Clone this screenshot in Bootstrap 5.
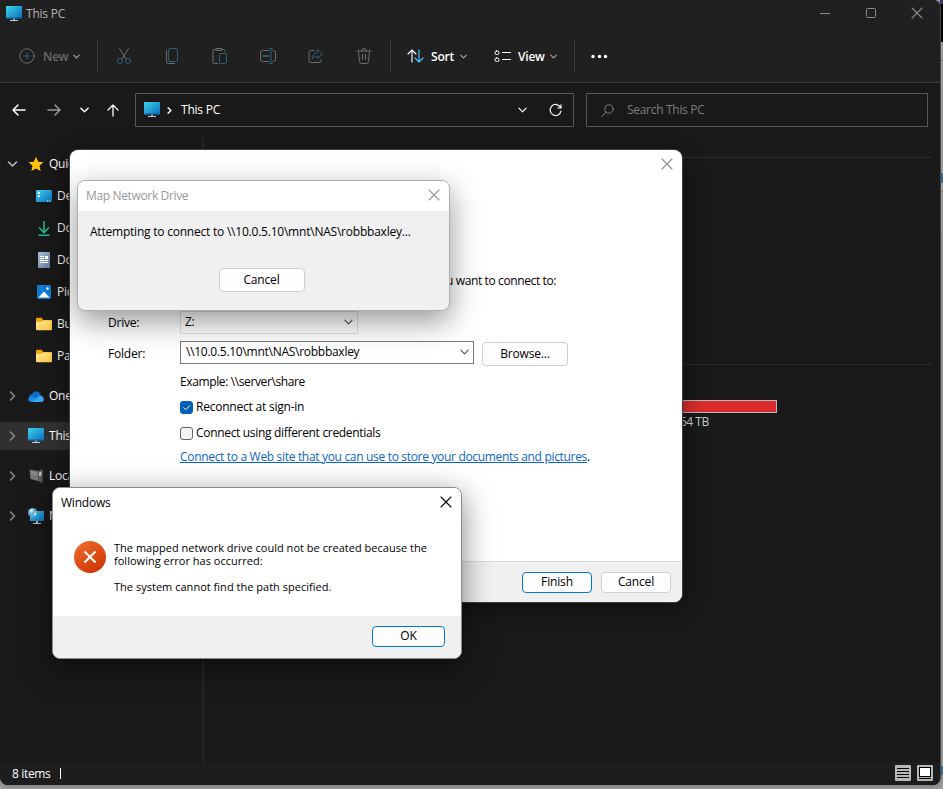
<!DOCTYPE html>
<html lang="en">
<head>
<meta charset="utf-8">
<title>This PC</title>
<meta name="viewport" content="width=device-width, initial-scale=1">
<link href="https://cdn.jsdelivr.net/npm/bootstrap@5.3.0/dist/css/bootstrap.min.css" rel="stylesheet">
<style>
html,body{height:100%;overflow:hidden}
body{font-family:"Open Sans","Noto Sans",sans-serif;font-size:12px;line-height:16px;background:#a3a3a3;color:#000;letter-spacing:-.22px}
svg{display:block;flex:none;overflow:visible}
.ln{fill:none;stroke:currentColor;stroke-linecap:round;stroke-linejoin:round}
.desk{width:943px;height:789px;background:#a3a3a3}
.edge{left:940px;top:0;width:3px;height:789px}
.edge div{width:3px}
.explorer{width:941px;height:785px;background:#191919;color:#fff;border-radius:0 8px 8px 8px;border-right:1px solid #4a4a4a;overflow:hidden;box-shadow:0 0 10px rgba(0,0,0,.4)}
.topbar{height:83px;background:#202020;border-bottom:1px solid #3d3d3d}
.titlebar{height:28px;color:#b4b4b4;padding:0 17px 2px 6px}
.titlebar svg use{transform:translateY(0)}
.winbtns{gap:34px;color:#8a8a8a}
.tools{height:54px;color:#6b6b6b;padding-top:2px}
.tools .vr{width:1px;height:32px;background:#3a3a3a;opacity:1;align-self:center}
.dim{color:#6e6e6e}.dimblue{color:#2d5f78}
.address{height:55px;padding:10px 12px 0 12px}
.addr-box{border:1px solid #565656;height:34px}
.path-box{width:439px}.search-box{width:342px;color:#7d7d7d}
.side{width:204px;padding-top:10px;border-right:2px solid #262626;color:#fff}
.side-item{height:32px;padding-left:36px}
.side-root{height:28px;padding-left:7px;margin:2px 0}
.side-root.gap-above{margin-top:12px;margin-bottom:0}
.side-item + .side-root.gap-above{margin-top:10px}
.side-root.chosen{background:#303030}
.side .chev{color:#8a8a8a;margin-right:10px}
.main-pane{padding:19px 8px 0 0}
.rule-line{height:1px;background:#2b2b2b}
.usage{width:192px;height:13px;border:1px solid #b9b9b9;background:#d92b2b;margin:35px 0 0 381px}
.usage-note{margin:1px 0 0 476px;color:#ccc;width:60px;letter-spacing:-.5px}
.status{height:23px;background:#1d1d1d;padding:0 7px 0 12px;letter-spacing:-.35px}
.caret{width:1px;height:11px;background:#fff;margin-left:10px}
.win{position:absolute;border-radius:8px;overflow:hidden}
.wizard{left:70px;top:150px;width:612px;height:452px;background:#fff;box-shadow:0 0 0 1px #3e3e3e,0 6px 22px rgba(0,0,0,.45)}
.wizard-body{padding:99px 0 0 38px;letter-spacing:-.32px}
.lead-in{height:20px;padding-left:338px;line-height:20px;letter-spacing:-.38px}
.field-name{width:72px;flex:none;letter-spacing:-.2px}
.combo{border:1px solid #dcdcdc;padding:0 4px 2px 4px;letter-spacing:-.27px}
.combo-drive{width:178px;height:23px;border-color:rgba(0,0,0,.12)}
.combo-folder{width:294px;height:23px;border-color:#7a7a7a;padding-left:5px}
.sample{letter-spacing:-.38px}
.btn-win{--bs-btn-padding-y:0;--bs-btn-padding-x:0;--bs-btn-font-size:12px;--bs-btn-line-height:16px;--bs-btn-color:#000;--bs-btn-bg:#fdfdfd;--bs-btn-border-color:#cfcfcf;--bs-btn-border-radius:4px;letter-spacing:-.15px}
.btn-win.primary{--bs-btn-border-color:#0078d4}
.wb{width:70px;height:21px}.wb-l{width:86px;height:24px}.wb-ok{width:73px;height:21px}
.tick{width:13px;height:13px;border:1px solid #666;border-radius:3px;background:#f4f4f4;margin-right:3px}
.tick.on{background:#005fb8;border-color:#005fb8}
.wizard a{color:#0b66c8}
.foot{background:#f0f0f0}
.wizard .foot{height:41px;border-top:1px solid #dcdcdc;padding-right:11px;gap:9px}
.progress-win{left:77px;top:180px;width:373px;height:131px;border:1px solid #aeaeae;background:#f0f0f0;box-shadow:0 10px 30px rgba(0,0,0,.42)}
.cap{height:30px;background:#fff;padding:0 9px 0 8px}
.progress-win .cap{letter-spacing:-.35px}
.progress-win .cap svg,.error-win .cap svg{margin-top:-2px}
.error-win{left:52px;top:487px;width:410px;height:172px;border:1px solid #8a8a8a;background:#fff;box-shadow:0 8px 30px rgba(0,0,0,.5)}
.err-text{font-size:11px;line-height:13px;letter-spacing:.02px}
.error-win .foot{height:42px;padding:0 16px 2px 0}
</style>
<script src="https://cdn.jsdelivr.net/npm/bootstrap@5.3.0/dist/js/bootstrap.bundle.min.js"></script>
</head>
<body>
<svg width="0" height="0" class="position-absolute">
<defs>
<linearGradient id="scr" x1="0" y1="0" x2="1" y2="1"><stop offset="0" stop-color="#3ed4e8"/><stop offset="1" stop-color="#0a6cc0"/></linearGradient>
<linearGradient id="fold" x1="0" y1="0" x2="1" y2="1"><stop offset="0" stop-color="#ffe9a4"/><stop offset="1" stop-color="#f8c53a"/></linearGradient>
<linearGradient id="errg" x1="0" y1="0" x2=".6" y2="1"><stop offset="0" stop-color="#f0702e"/><stop offset="1" stop-color="#d13605"/></linearGradient>
<linearGradient id="docg" x1="0" y1="0" x2="1" y2="1"><stop offset="0" stop-color="#a9bdd3"/><stop offset="1" stop-color="#5f7a9b"/></linearGradient>
<symbol id="pc" viewBox="0 0 16 16"><rect y="0" width="16" height="12.5" rx=".6" fill="url(#scr)"/><path d="M.5 12h15" stroke="#0b5a93"/><path d="M7 12.5h2v2H7z" fill="#8b9aab"/><path d="M4 14h8v1H4z" fill="#c3ccd8"/></symbol>
<symbol id="x" viewBox="0 0 12 12"><path class="ln" d="M1 1l10 10M11 1L1 11" stroke-width="1.1"/></symbol>
<symbol id="dn" viewBox="0 0 10 6"><path class="ln" d="M1 1l4 4 4-4"/></symbol>
<symbol id="rt" viewBox="0 0 6 10"><path class="ln" d="M1 1l4 4-4 4"/></symbol>
<symbol id="folder" viewBox="0 0 16 14"><path d="M0 2Q0 .8 1.2.8h4.2L7.4 3H15q1 0 1 1v8H0z" fill="#f0a808"/><path d="M0 4.8h6L7.8 3.5H15q1 0 1 1V12q0 1.2-1.2 1.2H1.200Q0 13.200 0 12z" fill="url(#fold)"/></symbol>
</defs>
</svg>

<div class="desk position-relative overflow-hidden">
  <div class="edge position-absolute d-flex flex-column">
    <div style="height:4px;background:#3a3a78"></div><div style="height:38px;background:#000"></div>
    <div style="height:18px;background:#bdbdbd"></div><div style="height:1px;background:#8b8b8b"></div>
    <div style="height:112px;background:#bdbdbd"></div><div style="height:10px;background:#4481ad"></div>
    <div style="height:8px;background:#c6c6c6"></div><div style="height:1px;background:#8b8b8b"></div>
    <div style="height:38px;background:#bdbdbd"></div><div style="height:536px;background:#b2b2b2"></div>
    <div style="height:9px;background:#3a83a6"></div>
  </div>

  <div class="explorer position-relative d-flex flex-column">
    <header class="topbar">
      <div class="titlebar d-flex align-items-center justify-content-between">
        <div class="d-flex align-items-center gap-1" style="padding-top:2px"><svg width="16" height="16"><use href="#pc"/></svg><span>This PC</span></div>
        <div class="winbtns d-flex align-items-center">
          <svg width="12" height="12"><path d="M1 6.500h10" stroke="currentColor"/></svg>
          <svg width="12" height="12"><rect x="1.500" y="1.500" width="9" height="9" rx="1" fill="none" stroke="currentColor"/></svg>
          <svg width="12" height="12"><use href="#x"/></svg>
        </div>
      </div>
      <div class="tools d-flex align-items-center">
        <div class="d-flex align-items-center" style="width:97px;padding-left:19px">
          <svg class="dim" width="16" height="16"><circle class="ln" cx="8" cy="8" r="7.200"/><path class="ln dimblue" d="M8 5v6M5 8h6"/></svg>
          <span class="fw-semibold" style="margin:2px 5px 0 8px">New</span><svg width="7" height="5" style="color:#aaa;stroke-width:1.600"><use href="#dn"/></svg>
        </div>
        <div class="vr"></div>
        <div class="d-flex align-items-center justify-content-between" style="width:256px;margin:0 18px 0 18px">
          <svg class="dim" width="16" height="16"><path class="ln" d="M3.500.5L10 11M12.500.5L6 11"/><g class="dimblue"><circle class="ln" cx="4" cy="13" r="2.500"/><circle class="ln" cx="12" cy="13" r="2.500"/></g></svg>
          <svg class="dim" width="16" height="16"><path class="ln" d="M2.500 2.500v11q0 2 2 2h6"/><rect class="ln dimblue" x="4.500" y=".5" width="9" height="13" rx="1.500"/></svg>
          <svg class="dim" width="16" height="16"><path class="ln" d="M4 1.500H2q-1 0-1 1v12q0 1 1 1h4M10 1.500h1.500q1 0 1 1v1M4.500.5h5v2h-5z"/><rect class="ln dimblue" x="7.500" y="5.500" width="7" height="10" rx="1"/></svg>
          <svg class="dim" width="16" height="16"><path class="ln" d="M8.500 2.500h-6q-2 0-2 2v7q0 2 2 2h6M13 2.500q2.500 0 2.500 2v7q0 2-2.500 2"/><g class="dimblue"><path class="ln" d="M9.500.5h3M11 .5v15M9.500 15.500h3"/><path class="ln" stroke-width="2" d="M3.500 8h5"/></g></svg>
          <svg class="dim" width="16" height="16"><path class="ln" d="M6 2.500H3q-2 0-2 2v8q0 2 2 2h8q2 0 2-2v-1"/><path class="ln dimblue" d="M9.500 4V1.500l5 4.500-5 4.500V8Q6 8 4 11q.5-6 5.500-7z"/></svg>
          <svg class="dim" width="16" height="16"><path class="ln" d="M1 3h14M6 3V2q0-1.500 2-1.500T10 2v1M2.500 3l1 10.500q.2 2 2 2h5q1.800 0 2-2L13.500 3M6.500 6.500v5M9.500 6.500v5"/></svg>
        </div>
        <div class="vr"></div>
        <div class="d-flex align-items-center text-white" style="width:183px;padding-left:16px">
          <svg width="17" height="14" style="margin-right:7px"><path class="ln" d="M5 13V1M1 5l4-4 4 4" stroke-width="1.100"/><path class="ln" style="color:#4cc2ff" d="M12 1v12M8 9l4 4 4-4" stroke-width="1.200"/></svg>
          <span class="fw-semibold" style="width:24px;padding-top:2px">Sort</span><svg width="7" height="5" style="color:#aaa;margin:0 27px 0 5px;stroke-width:1.500"><use href="#dn"/></svg>
          <svg width="17" height="13" style="margin-right:7px"><rect class="ln" x="1" y="1" width="4" height="3.500" rx="1.500"/><rect class="ln" x="1" y="8" width="4" height="3.500" rx="1.500"/><path class="ln" d="M8.500 2.500h8M8.500 9.500h8"/></svg>
          <span class="fw-semibold" style="width:27px;padding-top:2px">View</span><svg width="7" height="5" style="color:#aaa;margin:0 0 0 5px;stroke-width:1.500"><use href="#dn"/></svg>
        </div>
        <div class="vr"></div>
        <svg class="ms-3" width="17" height="4" fill="#fff"><circle cx="2" cy="2.500" r="1.700"/><circle cx="8.500" cy="2.500" r="1.700"/><circle cx="14.500" cy="2.500" r="1.700"/></svg>
      </div>
    </header>

    <div class="address d-flex">
      <div class="d-flex align-items-center" style="width:123px;height:34px">
        <svg width="14" height="12"><path class="ln" d="M13 6H1M6 1L1 6l5 5" stroke-width="1.500"/></svg>
        <svg width="14" height="12" style="margin-left:21px;color:#9a9a9a"><path class="ln" d="M1 6h12M8 1l5 5-5 5" stroke-width="1.500"/></svg>
        <svg width="9" height="6" style="margin-left:19px;stroke-width:1.600"><use href="#dn"/></svg>
        <svg width="12" height="13" style="margin-left:18px"><path class="ln" d="M6 12V1M1 6l5-5 5 5" stroke-width="1.300"/></svg>
      </div>
      <div class="addr-box path-box d-flex align-items-center">
        <svg width="16" height="16" style="margin:0 7px 0 8px"><use href="#pc"/></svg>
        <svg width="5" height="7" style="stroke-width:2"><use href="#rt"/></svg>
        <span style="margin-left:9px">This PC</span>
        <svg class="ms-auto" width="9" height="6" style="margin-right:22px;stroke-width:1.300"><use href="#dn"/></svg>
        <svg width="13" height="13" style="margin-right:11px"><path class="ln" d="M11.500 3.500A5.500 5.500 0 1 0 12 7M12 .8v3.200H8.800" stroke-width="1.200"/></svg>
      </div>
      <div class="addr-box search-box d-flex align-items-center" style="margin-left:12px">
        <svg width="13" height="13" style="margin:0 13px 0 14px"><circle class="ln" cx="8" cy="5" r="4.200"/><path class="ln" d="M5 8.200L.8 12.500"/></svg>
        <span style="letter-spacing:-.3px">Search This PC</span>
      </div>
    </div>

    <div class="d-flex flex-grow-1">
      <nav class="side">
        <div class="side-root d-flex align-items-center"><svg class="chev" width="11" height="6" style="color:#bbb;stroke-width:1.600"><use href="#dn"/></svg>
          <svg width="16" height="16" style="margin-right:5px"><path d="M8 .8l2.200 4.900 5.200.6-3.900 3.500 1.100 5.200L8 12.400 3.400 15l1.100-5.200L.6 6.300l5.200-.6z" fill="#ffc20e"/></svg><span>Quic</span></div>
        <div class="side-item d-flex align-items-center"><svg width="16" height="12" style="margin-right:5px"><rect width="16" height="12" rx="1" fill="url(#scr)"/><path d="M2 2h2v2H2zM2 5.500h2v1.500H2zM11 10.500h1v1h-1zM13 10.500h1v1h-1z" fill="#fff"/></svg><span>De</span></div>
        <div class="side-item d-flex align-items-center"><svg width="16" height="16" style="margin-right:5px"><path d="M8 1v11M3 7.500l5 5 5-5M2.500 15.300h11" fill="none" stroke="#1fb58b" stroke-width="1.600"/></svg><span>Do</span></div>
        <div class="side-item d-flex align-items-center"><svg width="16" height="16" style="margin-right:5px"><rect x="2" width="12" height="16" rx="1" fill="url(#docg)"/><path d="M4 4.500h4M4 6.500h4M4 8.500h8M4 10.500h8" stroke="#fff"/><path d="M9 4h3v3H9z" fill="#fff"/></svg><span>Do</span></div>
        <div class="side-item d-flex align-items-center"><svg width="16" height="14" style="margin-right:5px"><rect x="1" width="14" height="14" rx="1" fill="#1279d0"/><path d="M2.500 12.500L8 6.500l5.500 6z" fill="#fff"/><circle cx="11.500" cy="3.500" r="1.200" fill="#fff"/></svg><span>Pic</span></div>
        <div class="side-item d-flex align-items-center"><svg width="16" height="14" style="margin-right:5px"><use href="#folder"/></svg><span>Bu</span></div>
        <div class="side-item d-flex align-items-center"><svg width="16" height="14" style="margin-right:5px"><use href="#folder"/></svg><span>Pa</span></div>
        <div class="side-root gap-above d-flex align-items-center"><svg class="chev" width="11" height="10" style="stroke-width:1.600"><use href="#rt"/></svg>
          <svg width="16" height="11" style="margin-right:5px"><path d="M1 8Q0 3.500 4 3.200 6-1 10.500 1 12.500 2 13 4.500L8 9z" fill="#0f6cc4"/><path d="M3 11Q-.5 10.500.5 7.500 2 5 5 5.500L14.500 10.500Q13.500 11 12.500 11z" fill="#1a8be0"/><path d="M4 11l7-6q3.500-.8 4.500 2 1 3.500-2 4z" fill="#35a9f0"/></svg><span>One</span></div>
        <div class="side-root gap-above chosen d-flex align-items-center"><svg class="chev" width="11" height="10" style="stroke-width:1.600"><use href="#rt"/></svg>
          <svg width="16" height="16" style="margin-right:5px"><use href="#pc"/></svg><span>This</span></div>
        <div class="side-root gap-above d-flex align-items-center"><svg class="chev" width="11" height="10" style="stroke-width:1.600"><use href="#rt"/></svg>
          <svg width="16" height="16" style="margin-right:5px"><path d="M1.500 1.500L10 3v10l-7.500-2z" fill="#777"/><path d="M10 3l4.500-2v14L10 13z" fill="#5a5a5a"/><path d="M11 4.500l2.500-1v4L11 8z" fill="#bbb"/><path d="M3.500 4l5 1M3.700 6l4.800 1" stroke="#999"/></svg><span>Loca</span></div>
        <div class="side-root gap-above d-flex align-items-center"><svg class="chev" width="11" height="10" style="stroke-width:1.600"><use href="#rt"/></svg>
          <svg width="16" height="16" style="margin-right:5px"><rect x="2" y="3" width="14" height="10" fill="url(#scr)"/><path d="M8 13h2v2H8zM5 15h8v1H5z" fill="#b9c4d0"/><circle cx="4.500" cy="4.500" r="4.500" fill="#6cb3d9"/><path d="M1.500 2.500Q4 0 5 2T3 5M6 5.500q2-2 2.500.5L6.500 8z" fill="#d6eef8"/></svg><span>N</span></div>
      </nav>
      <main class="main-pane flex-grow-1">
        <div class="rule-line"></div>
        <div class="rule-line" style="margin-top:206px"></div>
        <div class="usage"></div>
        <div class="usage-note">54 TB</div>
      </main>
    </div>

    <footer class="status d-flex align-items-center">
      <span>8 items</span><div class="caret"></div>
      <svg class="ms-auto" width="16" height="16" style="margin-top:-2px"><rect width="16" height="16" rx="1" fill="#b4b8b8"/><path d="M2 3.500h12M2 6.500h12M2 9.500h12M2 12.500h12" stroke="#000"/></svg>
      <svg width="16" height="16" style="margin:-2px 0 0 6px"><rect width="16" height="16" rx="1" fill="#b4b8b8"/><rect x="2.500" y="2.500" width="11" height="9" fill="#fff" stroke="#000"/><path d="M2 13.500h12" stroke="#000"/></svg>
    </footer>
  </div>

  <section class="win wizard d-flex flex-column">
    <div class="d-flex justify-content-end" style="padding:8px 9px 2px 0;color:#8d8d8d"><svg width="12" height="12"><use href="#x"/></svg></div>
    <div class="wizard-body">
      <div class="lead-in">u want to connect to:</div>
      <div class="d-flex align-items-center" style="margin-top:20px"><span class="field-name">Drive:</span>
        <div class="combo combo-drive d-flex align-items-center justify-content-between"><span>Z:</span><svg width="9" height="6" style="color:#555;stroke-width:1.300"><use href="#dn"/></svg></div></div>
      <div class="d-flex" style="margin-top:7px;height:25px"><span class="field-name" style="padding-top:5px">Folder:</span>
        <div class="combo combo-folder d-flex align-items-center justify-content-between"><span>\\10.0.5.10\mnt\NAS\robbbaxley</span><svg width="9" height="6" style="color:#555;stroke-width:1.300"><use href="#dn"/></svg></div>
        <button class="btn btn-win wb-l ms-2" style="margin-top:1px">Browse...</button></div>
      <div style="padding-left:72px">
        <div class="d-flex align-items-center" style="height:32px"><span class="sample">Example: \\server\share</span></div>
        <div class="d-flex align-items-center" style="height:18px;letter-spacing:-.22px"><div class="tick on"><svg width="11" height="11"><path d="M2.500 5.500l2.200 2.200L8.800 3.500" fill="none" stroke="#fff"/></svg></div><span>Reconnect at sign-in</span></div>
        <div class="d-flex align-items-center mt-2" style="height:18px"><div class="tick"></div><span>Connect using different credentials</span></div>
        <div class="d-flex align-items-center" style="height:30px"><span><a href="#">Connect to a Web site that you can use to store your documents and pictures</a>.</span></div>
      </div>
    </div>
    <div class="foot mt-auto d-flex align-items-center justify-content-end">
      <button class="btn btn-win primary wb">Finish</button><button class="btn btn-win wb">Cancel</button>
    </div>
  </section>

  <section class="win progress-win">
    <div class="cap d-flex align-items-center justify-content-between" style="color:#999"><span>Map Network Drive</span><svg width="12" height="12"><use href="#x"/></svg></div>
    <div style="padding:13px 0 0 12px">Attempting to connect to \\10.0.5.10\mnt\NAS\robbbaxley...</div>
    <div class="d-flex justify-content-center" style="margin-top:28px;padding-right:4px"><button class="btn btn-win wb-l">Cancel</button></div>
  </section>

  <section class="win error-win d-flex flex-column">
    <div class="cap d-flex align-items-center justify-content-between"><span>Windows</span><svg width="12" height="12"><use href="#x"/></svg></div>
    <div class="d-flex" style="padding:23px 0 0 21px">
      <svg width="32" height="32" style="margin-right:8px"><circle cx="16" cy="16" r="16" fill="url(#errg)"/><path d="M10.500 10.500l11 11M21.500 10.500l-11 11" stroke="#fff" stroke-width="2"/></svg>
      <div class="err-text"><div>The mapped network drive could not be created because the<br>following error has occurred:</div><div style="margin-top:13px">The system cannot find the path specified.</div></div>
    </div>
    <div class="foot mt-auto d-flex align-items-center justify-content-end"><button class="btn btn-win primary wb-ok">OK</button></div>
  </section>
</div>
</body>
</html>
